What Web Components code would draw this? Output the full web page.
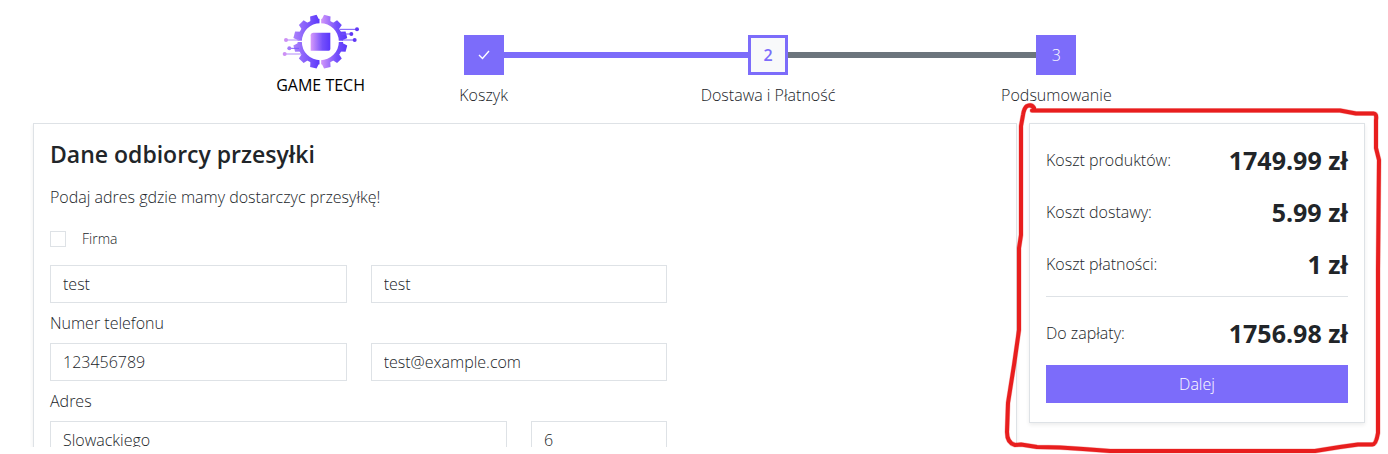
<!DOCTYPE html>
<html lang="pl">
<head>
<meta charset="utf-8">
<meta name="viewport" content="width=device-width, initial-scale=1">
<title>Game Tech – Dostawa i Płatność</title>
<style>
  html { height: 100%; }
  body {
    margin: 0; height: 100%; overflow: hidden; background: #fff; color: #212529;
    font: 300 16px/24px "Open Sans", "Noto Sans", sans-serif;
    --accent: #7c6cfa; --line: #dee2e6; --muted: #6c757d;
  }
</style>
</head>
<body>
<checkout-page>
  <brand-logo slot="header"></brand-logo>
  <step-list slot="header">
    <step-item state="done">Koszyk</step-item>
    <step-link state="done"></step-link>
    <step-item state="current" number="2">Dostawa i Płatność</step-item>
    <step-link></step-link>
    <step-item number="3">Podsumowanie</step-item>
  </step-list>
  <address-panel slot="form">
    <span slot="title">Dane odbiorcy przesyłki</span>
    <span slot="lead">Podaj adres gdzie mamy dostarczyc przesyłkę!</span>
    <check-field slot="company">Firma</check-field>
    <text-field class="half" name="Imię" value="test"></text-field>
    <text-field class="half" name="Nazwisko" value="test"></text-field>
    <text-field class="half" label="Numer telefonu" type="tel" value="123456789"></text-field>
    <text-field class="half" name="E-mail" type="email" value="test@example.com"></text-field>
    <text-field class="wide" label="Adres" value="Slowackiego"></text-field>
    <text-field name="Numer domu" value="6"></text-field>
  </address-panel>
  <cost-summary slot="summary">
    <cost-row amount="1749.99 zł">Koszt produktów:</cost-row>
    <cost-row amount="5.99 zł">Koszt dostawy:</cost-row>
    <cost-row amount="1 zł">Koszt płatności:</cost-row>
    <cost-row slot="total" amount="1756.98 zł">Do zapłaty:</cost-row>
    <span slot="action">Dalej</span>
  </cost-summary>
</checkout-page>

<script>
const define = (name, markup, setup) => {
  const template = document.createElement('template');
  template.innerHTML = markup;
  customElements.define(name, class extends HTMLElement {
    constructor() {
      super();
      this.attachShadow({ mode: 'open' }).append(template.content.cloneNode(true));
    }
    connectedCallback() { if (setup) setup(this, this.shadowRoot); }
  });
};

define('checkout-page', `
  <style>
    :host { display: flex; flex-direction: column; height: 100%; box-sizing: border-box; padding-bottom: 7px; }
    header { display: flex; gap: 98px; width: calc(60% + 4px); margin: 0 auto; padding: 14px 0 16px; }
    main { flex: 1; min-height: 0; display: grid; grid-template-columns: 41fr 14fr; grid-template-rows: minmax(0, 1fr); gap: 12px; padding: 0 23px 0 33px; align-items: start; }
    .form { height: 100%; min-height: 0; overflow-x: visible; overflow-y: clip; }
  </style>
  <header><slot name="header"></slot></header>
  <main><div class="form"><slot name="form"></slot></div><slot name="summary"></slot></main>`);

define('brand-logo', `
  <style>
    :host { display: block; width: 90px; flex: none; }
    a { display: block; color: #000; text-decoration: none; text-align: center; white-space: nowrap; font-weight: 500; line-height: 24px; }
    svg { display: block; width: 100%; height: 56px; margin-bottom: 3px; }
  </style>
  <a href="#">
    <svg viewBox="33 27 270 168" aria-hidden="true">
      <defs>
        <linearGradient id="g" x1="0" x2="1"><stop offset="0" stop-color="#ad83fb"/><stop offset="1" stop-color="#5936fb"/></linearGradient>
        <linearGradient id="h" x1="0" x2="1"><stop offset="0" stop-color="#d79afa"/><stop offset=".6" stop-color="#7450fb"/><stop offset="1" stop-color="#5936fb"/></linearGradient>
        <mask id="m" maskUnits="userSpaceOnUse" x="33" y="20" width="270" height="180">
          <circle cx="166" cy="110" r="62" fill="none" stroke="#fff" stroke-width="13"/>
          <g id="teeth" fill="#fff"></g>
          <path d="M166 20V200" stroke="#000" stroke-width="5"/>
          <path d="M80 109H252" stroke="#000" stroke-width="4"/>
        </mask>
      </defs>
      <g mask="url(#m)">
        <rect x="84" y="28" width="82" height="164" fill="url(#g)"/>
        <rect x="166" y="28" width="82" height="164" fill="url(#h)"/>
      </g>
      <path d="M145 83H196V132Q196 137 191 137H137V91Q137 83 145 83Z" fill="url(#h)"/>
      <g fill="none" stroke="#b18afa" stroke-width="3"><path d="M62 105H102"/><path d="M59 147H108"/><path d="M73 130H102" stroke="#7c59fb"/></g>
      <g fill="none" stroke="#7653fb" stroke-width="3"><path d="M225 73H276M230 87H259M232 105H269"/></g>
      <g fill="#cd8ff5"><circle cx="63" cy="105" r="6"/><circle cx="59" cy="147" r="6"/><circle cx="73" cy="130" r="6" fill="#a47bfa"/></g>
      <g fill="#6038f5"><circle cx="276" cy="73" r="6"/><circle cx="259" cy="87" r="6"/><circle cx="269" cy="105" r="6"/></g>
    </svg>
    GAME TECH
  </a>`, (host, root) => {
    const teeth = root.getElementById('teeth');
    if (teeth.childNodes.length) return;
    for (let i = 0; i < 12; i++) {
      const tooth = document.createElementNS('http://www.w3.org/2000/svg', 'path');
      tooth.setAttribute('d', 'M152 48L156 29H176L180 48Z');
      tooth.setAttribute('transform', `rotate(${15 + i * 30} 166 110)`);
      teeth.append(tooth);
    }
  });

define('step-list', `
  <style>:host { display: flex; flex: 1; padding: 21px 36px 0 0; }</style>
  <slot></slot>`, host => host.setAttribute('role', 'list'));

define('step-link', `
  <style>
    :host { display: block; flex: 62; height: 6px; margin-top: 17px; background: var(--muted); }
    :host([state="done"]) { flex: 61; background: var(--accent); }
  </style>`);

define('step-item', `
  <style>
    :host { display: flex; flex-direction: column; align-items: center; width: 40px; gap: 8px; white-space: nowrap; }
    button { width: 40px; height: 40px; flex: none; box-sizing: border-box; padding: 0; border: 3px solid var(--accent);
      background: var(--accent); color: #fff; font: inherit; display: grid; place-items: center; }
    :host([state="current"]) button { background: #f8f9fa; color: var(--accent); font-weight: 600; }
    svg { width: 12px; height: 10px; }
  </style>
  <button type="button" aria-labelledby="name"></button><span id="name"><slot></slot></span>`, (host, root) => {
    host.setAttribute('role', 'listitem');
    root.querySelector('button').innerHTML = host.getAttribute('number') ||
      '<svg viewBox="0 0 12 10"><path d="M1 5L4.500 8.500L11 1" fill="none" stroke="#fff" stroke-width="1.400"/></svg>';
  });

define('address-panel', `
  <style>
    :host { display: block; min-height: 480px; box-sizing: border-box; border: 1px solid var(--line); padding: 16px; background: #fff; box-shadow: 0 2px 4px rgba(0,0,0,.075); }
    h2 { margin: 0 0 16px; font-size: 23px; line-height: 29px; font-weight: 600; }
    p { margin: 0 0 16px; }
    .columns { display: grid; grid-template-columns: 2fr 1fr; column-gap: 24px; }
    form { display: grid; grid-template-columns: repeat(4, minmax(0, 1fr)); gap: 8px 24px; align-items: end; margin-top: 12px; }
    ::slotted(.half) { grid-column: span 2; }
    ::slotted(.wide) { grid-column: span 3; }
  </style>
  <h2><slot name="title"></slot></h2>
  <p><slot name="lead"></slot></p>
  <slot name="company"></slot>
  <div class="columns"><form><slot></slot></form></div>`);

define('check-field', `
  <style>
    :host { display: block; }
    label { display: flex; width: fit-content; align-items: center; gap: 16px; height: 28px; font-size: 14px; }
    input { appearance: none; width: 16px; height: 16px; margin: 0; border: 1px solid var(--line); background: #fff; }
    input:checked { background: var(--accent); }
  </style>
  <label><input type="checkbox"><slot></slot></label>`);

define('text-field', `
  <style>
    :host { display: block; min-width: 0; }
    label { display: block; margin-bottom: 8px; }
    label[hidden] { display: none; }
    input { display: block; width: 100%; height: 38px; box-sizing: border-box; padding: 6px 12px; border: 1px solid var(--line);
      border-radius: 0; background: #fff; color: inherit; font: inherit; }
  </style>
  <label for="box"></label><input id="box">`, (host, root) => {
    const label = root.querySelector('label'), input = root.querySelector('input');
    const text = host.getAttribute('label');
    if (text) label.textContent = text;
    else { label.hidden = true; input.setAttribute('aria-label', host.getAttribute('name')); }
    input.type = host.getAttribute('type') || 'text';
    input.value = host.getAttribute('value');
  });

define('cost-summary', `
  <style>
    :host { display: block; position: relative; box-sizing: border-box; border: 1px solid var(--line); padding: 10px 16px 19px; background: #fff; box-shadow: 0 2px 4px rgba(0,0,0,.075); }
    hr { height: 1px; margin: 6px 0 10px; border: 0; background: var(--line); }
    button { display: block; width: 100%; height: 38px; margin-top: 6px; border: 0; background: var(--accent); color: #fff; font: inherit; }
    svg { position: absolute; left: -27px; top: -24px; width: calc(100% + 49px); height: calc(100% + 56px); pointer-events: none; }
  </style>
  <slot></slot>
  <hr>
  <slot name="total"></slot>
  <button type="button"><slot name="action"></slot></button>
  <svg viewBox="1003 100 383 354" preserveAspectRatio="none" aria-hidden="true">
    <g fill="none" stroke-linecap="round" stroke-linejoin="round">
      <path stroke="#e81e1e" stroke-opacity=".3" stroke-width="5" d="M1034 108Q1032 104 1027 106Q1024 108 1023 115L1021 126V235L1019 248V330L1014 365L1008 403L1007 432Q1007 443 1015 445L1021 444.500L1037 447L1060 447.500L1083 449L1110 451H1315L1340 447L1358 444.500H1372Q1376 445 1378 433V270L1379 160L1376 148L1376 120Q1377 113 1373 113.500H1356L1340 110.500H1032"/>
      <path stroke="#e81e1e" stroke-width="4" d="M1034 108Q1032 104 1027 106Q1024 108 1023 115L1021 126V235L1019 248V330L1014 365L1008 403L1007 432Q1007 443 1015 445L1021 444.500L1037 447L1060 447.500L1083 449L1110 451H1315L1340 447L1358 444.500H1372Q1376 445 1378 433V270L1379 160L1376 148L1376 120Q1377 113 1373 113.500H1356L1340 110.500H1032"/>
    </g>
  </svg>`);

define('cost-row', `
  <style>
    :host { display: flex; align-items: center; justify-content: space-between; height: 52px; }
    strong { font-size: 25px; line-height: 36px; font-weight: 700; }
  </style>
  <span><slot></slot></span><strong></strong>`, (host, root) => {
    root.querySelector('strong').textContent = host.getAttribute('amount');
  });
</script>
</body>
</html>
